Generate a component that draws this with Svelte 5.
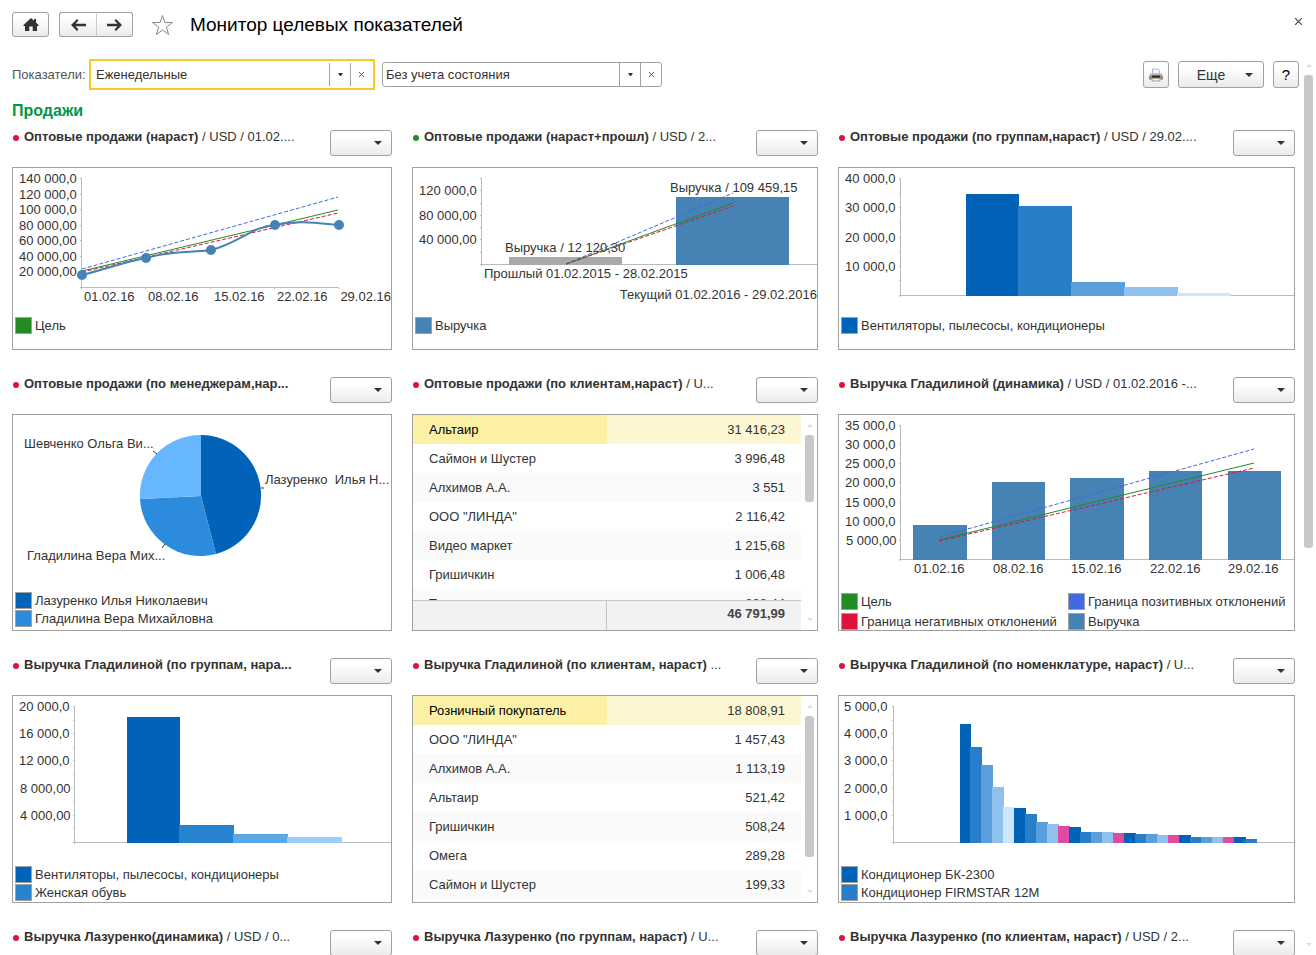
<script>
	const blues = ['#0063b8', '#287ec8', '#5a9fdc', '#8fc1ec', '#cce6ff'];
	const steel = '#4682b4';
	const green = '#228b22';
	const royal = '#4169e1';
	const crimson = '#dc143c';
	const pink = '#e04aa3';

	let period = $state('Еженедельные');
	let status = $state('Без учета состояния');

	const itemTops = [
		28, 51, 69, 91, 111, 112, 118, 126, 128, 130, 131, 136, 136, 136, 137, 137, 138, 138, 139, 139, 139, 141,
		141, 141, 141, 141, 143
	];

	const itemBars = itemTops.map((top, i) => {
		const color = i % 5 === 4 && i > 4 ? pink : blues[i % 5];
		return [i ? 120 + i * 11 : 121, top, i ? 12 : 11, color];
	});

	// bars: [x, top, width, color], lines: [x1, y1, x2, y2, color, dashed], labels: [x, y, text, anchor]
	const rows = [
		{
			height: 183,
			cards: [
				{
					title: 'Оптовые продажи (нараст)',
					info: ' / USD / 01.02....',
					chart: {
						height: 149,
						axis: { x: 68, top: 10, bottom: 119, end: 326 },
						ticks: [10, 26, 41, 57, 72, 88, 103],
						xTicks: [68, 132, 197, 261, 325],
						labels: [
							[6, 10, '140 000,0'],
							[6, 26, '120 000,0'],
							[6, 41, '100 000,0'],
							[6, 57, '80 000,00'],
							[6, 72, '60 000,00'],
							[6, 88, '40 000,00'],
							[6, 103, '20 000,00'],
							[71, 128, '01.02.16'],
							[135, 128, '08.02.16'],
							[201, 128, '15.02.16'],
							[264, 128, '22.02.16'],
							['100%', 128, '29.02.16', 'end']
						],
						lines: [
							[69, 101, 325, 29, royal, true],
							[69, 103, 325, 42, green, false],
							[69, 104, 325, 45, crimson, true]
						],
						curve: 'M69 107C90 102 111 94 133 90C160 82 178 85 198 82C224 76 240 58 262 57C284 52 304 55 326 57',
						dots: [
							[69, 107],
							[133, 90],
							[198, 82],
							[262, 57],
							[326, 57]
						]
					},
					legend: [[green, 'Цель']]
				},
				{
					title: 'Оптовые продажи (нараст+прошл)',
					info: ' / USD / 2...',
					good: true,
					chart: {
						height: 149,
						axis: { x: 68, top: 10, bottom: 96 },
						ticks: [10, 22, 35, 47, 59, 71, 84],
						bars: [
							[96, 89, 113, '#a9a9a9'],
							[263, 29, 113, steel]
						],
						labels: [
							[6, 22, '120 000,0'],
							[6, 47, '80 000,00'],
							[6, 71, '40 000,00'],
							[92, 79, 'Выручка / 12 120,30'],
							[257, 19, 'Выручка / 109 459,15'],
							[71, 105, 'Прошлый 01.02.2015 - 28.02.2015'],
							['100%', 126, 'Текущий 01.02.2016 - 29.02.2016', 'end']
						],
						lines: [
							[153, 96, 320, 25, royal, true],
							[153, 96, 320, 35, green, false],
							[153, 96, 320, 38, crimson, true]
						]
					},
					legend: [[steel, 'Выручка']]
				},
				{
					title: 'Оптовые продажи (по группам,нараст)',
					info: ' / USD / 29.02....',
					chart: {
						height: 149,
						axis: { x: 61, top: 10, bottom: 127 },
						ticks: [10, 25, 39, 54, 69, 83, 98, 112],
						bars: [
							[127, 26, 53, blues[0]],
							[179, 38, 54, blues[1]],
							[232, 114, 54, blues[2]],
							[285, 119, 54, blues[3]],
							[338, 125, 54, blues[4]]
						],
						labels: [
							[6, 10, '40 000,0'],
							[6, 39, '30 000,0'],
							[6, 69, '20 000,0'],
							[6, 98, '10 000,0']
						]
					},
					legend: [[blues[0], 'Вентиляторы, пылесосы, кондиционеры']]
				}
			]
		},
		{
			height: 217,
			cards: [
				{
					title: 'Оптовые продажи (по менеджерам,нар...',
					chart: {
						height: 177,
						slices: [
							['M188 81V20A60.5 60.5 0 0 1 203 139Z', '#0063b8'],
							['M188 81L203 139A60.5 60.5 0 0 1 127 84Z', '#2c8bdc'],
							['M188 81L127 84A60.5 60.5 0 0 1 188 20Z', '#66b7ff']
						],
						pointers: 'M140 36l4 3M149 133l3 -4M248 73h3',
						labels: [
							[11, 28, 'Шевченко Ольга Ви...'],
							[252, 64, 'Лазуренко\u00a0 Илья Н...'],
							[14, 140, 'Гладилина Вера Мих...']
						]
					},
					legend: [
						['#0063b8', 'Лазуренко Илья Николаевич'],
						['#2c8bdc', 'Гладилина Вера Михайловна']
					]
				},
				{
					title: 'Оптовые продажи (по клиентам,нараст)',
					info: ' / U...',
					table: [
						['Альтаир', '31 416,23'],
						['Саймон и Шустер', '3 996,48'],
						['Алхимов А.А.', '3 551'],
						['ООО "ЛИНДА"', '2 116,42'],
						['Видео маркет', '1 215,68'],
						['Гришичкин', '1 006,48'],
						['Топаз', '888,44']
					],
					total: '46 791,99',
					thumb: 38
				},
				{
					title: 'Выручка Гладилиной (динамика)',
					info: ' / USD / 01.02.2016 -...',
					chart: {
						height: 178,
						axis: { x: 61, top: 10, bottom: 144 },
						ticks: [10, 29, 48, 67, 87, 106, 125],
						bars: [
							[74, 110, 54, steel],
							[153, 67, 53, steel],
							[231, 63, 54, steel],
							[310, 56, 53, steel],
							[389, 56, 53, steel]
						],
						labels: [
							[6, 10, '35 000,0'],
							[6, 29, '30 000,0'],
							[6, 48, '25 000,0'],
							[6, 67, '20 000,0'],
							[6, 87, '15 000,0'],
							[6, 106, '10 000,0'],
							[7, 125, '5 000,00'],
							[75, 153, '01.02.16'],
							[154, 153, '08.02.16'],
							[232, 153, '15.02.16'],
							[311, 153, '22.02.16'],
							[389, 153, '29.02.16']
						],
						lines: [
							[100, 122, 415, 34, royal, true],
							[100, 125, 415, 48, green, false],
							[100, 126, 415, 53, crimson, true]
						]
					},
					wide: true,
					legend: [
						[green, 'Цель'],
						[royal, 'Граница позитивных отклонений'],
						[crimson, 'Граница негативных отклонений'],
						[steel, 'Выручка']
					]
				}
			]
		},
		{
			height: 208,
			cards: [
				{
					title: 'Выручка Гладилиной (по группам, нара...',
					chart: {
						height: 170,
						axis: { x: 61, top: 10, bottom: 146 },
						ticks: [10, 24, 37, 51, 64, 78, 92, 105, 119, 132],
						bars: [
							[114, 21, 53, '#0063b8'],
							[166, 129, 55, '#2984d0'],
							[220, 138, 55, '#5ca7e8'],
							[274, 141, 55, '#99cfff']
						],
						labels: [
							[6, 10, '20 000,0'],
							[6, 37, '16 000,0'],
							[6, 64, '12 000,0'],
							[7, 92, '8 000,00'],
							[7, 119, '4 000,00']
						]
					},
					legend: [
						['#0063b8', 'Вентиляторы, пылесосы, кондиционеры'],
						['#2984d0', 'Женская обувь']
					]
				},
				{
					title: 'Выручка Гладилиной (по клиентам, нараст)',
					info: ' ...',
					table: [
						['Розничный покупатель', '18 808,91'],
						['ООО "ЛИНДА"', '1 457,43'],
						['Алхимов А.А.', '1 113,19'],
						['Альтаир', '521,42'],
						['Гришичкин', '508,24'],
						['Омега', '289,28'],
						['Саймон и Шустер', '199,33']
					],
					thumb: 85
				},
				{
					title: 'Выручка Гладилиной (по номенклатуре, нараст)',
					info: ' / U...',
					chart: {
						height: 170,
						axis: { x: 54, top: 10, bottom: 146 },
						ticks: [10, 24, 37, 51, 64, 78, 92, 105, 119, 132],
						bars: itemBars,
						labels: [
							[5, 10, '5 000,0'],
							[5, 37, '4 000,0'],
							[5, 64, '3 000,0'],
							[5, 92, '2 000,0'],
							[5, 119, '1 000,0']
						]
					},
					legend: [
						[blues[0], 'Кондиционер БК-2300'],
						[blues[1], 'Кондиционер FIRMSTAR 12М']
					]
				}
			]
		},
		{
			height: 183,
			cards: [
				{ title: 'Выручка Лазуренко(динамика)', info: ' / USD / 0...' },
				{ title: 'Выручка Лазуренко (по группам, нараст)', info: ' / U...' },
				{ title: 'Выручка Лазуренко (по клиентам, нараст)', info: ' / USD / 2...' }
			]
		}
	];
</script>

{#snippet caret()}
	<svg class="caret" width="8" height="4" viewBox="0 0 8 4" aria-hidden="true"><path d="M0 0h8L4 4z" /></svg>
{/snippet}

{#snippet smallCaret()}
	<svg class="caret" width="5" height="3" viewBox="0 0 5 3" aria-hidden="true"><path d="M0 0h5L3 3H2z" /></svg>
{/snippet}

{#snippet cross(size)}
	<svg class="cross" width={size} height={size} viewBox="0 0 8 8" aria-hidden="true"><path d="M1 1l6 6M7 1l-6 6" /></svg>
{/snippet}

{#snippet plot(chart)}
	<svg class="plot" width="100%" height={chart.height}>
		{#if chart.axis}
			<g class="axis">
				<rect x={chart.axis.x} y={chart.axis.top} width="1" height={chart.axis.bottom - chart.axis.top + 2} />
				<rect x={chart.axis.x - 1} y={chart.axis.bottom} width={chart.axis.end ? chart.axis.end - chart.axis.x : '100%'} height="1" />
				{#each chart.ticks as y}
					<rect x={chart.axis.x - 1} {y} width="2" height="1" />
				{/each}
				{#each chart.xTicks ?? [] as x}
					<rect {x} y={chart.axis.bottom} width="1" height="2" />
				{/each}
			</g>
		{/if}
		{#each chart.bars ?? [] as [x, y, width, fill]}
			<rect {x} {y} {width} height={chart.axis.bottom + 1 - y} {fill} />
		{/each}
		{#each chart.slices ?? [] as [d, fill]}
			<path {d} {fill} />
		{/each}
		{#if chart.pointers}
			<path d={chart.pointers} class="pointers" />
		{/if}
		{#each chart.labels as [x, y, text, anchor]}
			<text {x} y={y + 5} text-anchor={anchor}>{text}</text>
		{/each}
		{#each chart.lines ?? [] as [x1, y1, x2, y2, stroke, dashed]}
			<line {x1} {y1} {x2} {y2} {stroke} class:dashed />
		{/each}
		{#if chart.curve}
			<path d={chart.curve} class="curve" />
			{#each chart.dots as [cx, cy]}
				<circle {cx} {cy} r="5" fill={steel} />
			{/each}
		{/if}
	</svg>
{/snippet}

{#snippet scrollbar(thumb)}
	<div class="scrollbar" aria-hidden="true">
		<svg width="6" height="3" viewBox="0 0 6 3"><path d="M3 0l3 3H0z" /></svg>
		<div class="track"><div class="thumb" style:height="{thumb}%"></div></div>
		<svg width="6" height="3" viewBox="0 0 6 3"><path d="M0 0h6L3 3z" /></svg>
	</div>
{/snippet}

<div class="page">
	<header>
		<button class="btn home" aria-label="Начальная страница">
			<svg width="16" height="14" viewBox="0 0 16 14"><path d="M8 0l3 2.700V1h2v3.500L15.500 7v1H14v5H9.700V8.500H6.300V13H2V8H.5V7z" /></svg>
		</button>
		<div class="nav">
			<button class="btn" aria-label="Назад">
				<svg width="15" height="12" viewBox="0 0 15 12"><path d="M6 0L0 6l6 6 1.500-1.500L4.500 7.300H15V4.700H4.500l3-3.200z" /></svg>
			</button>
			<button class="btn" aria-label="Вперед">
				<svg width="15" height="12" viewBox="0 0 15 12"><path d="M9 0l6 6-6 6-1.500-1.500 3-3.200H0V4.700h10.500l-3-3.200z" /></svg>
			</button>
		</div>
		<button class="plain" aria-label="В избранное">
			<svg class="star" width="23" height="22" viewBox="0 0 23 22"><path d="M11.500 1.500l2.400 7H21.500l-6.100 4.600 2.300 7.400-6.200-4.500-6.200 4.500 2.300-7.400L1.500 8.500h7.600z" /></svg>
		</button>
		<h1>Монитор целевых показателей</h1>
		<button class="plain close" aria-label="Закрыть">{@render cross(9)}</button>
	</header>

	<div class="body">
		<main>
			<div class="toolbar">
				<label for="period">Показатели:</label>
				<div class="combo active">
					<input id="period" bind:value={period} />
					<button aria-label="Выбрать показатели">{@render smallCaret()}</button>
					<button aria-label="Очистить показатели" onclick={() => (period = '')}>{@render cross(7)}</button>
				</div>
				<div class="combo">
					<input aria-label="Состояние" bind:value={status} />
					<button aria-label="Выбрать состояние">{@render smallCaret()}</button>
					<button aria-label="Очистить состояние" onclick={() => (status = '')}>{@render cross(7)}</button>
				</div>
				<div class="actions">
					<button class="btn square" aria-label="Печать">
						<svg width="14" height="14" viewBox="0 0 14 14">
							<path d="M3.500 6V1h5.500l1.500 1.500V6z" fill="#f4f9fd" stroke="#9db8cf" />
							<path d="M1.500 5.500h11L14 8v4H0V8z" fill="#b9b5b1" />
							<path d="M0 8h14v3H0z" fill="#8d8986" />
							<path d="M3 7.500h8v2H3z" fill="#222" />
							<path d="M3 10.500h8V13H3z" fill="#f5eee8" stroke="#a89f98" />
							<path d="M11.500 6.500h1v1h-1z" fill="#e07030" />
						</svg>
					</button>
					<button class="btn more">Еще {@render caret()}</button>
					<button class="btn square">?</button>
				</div>
			</div>

			<h2>Продажи</h2>

			<div class="rows">
				{#each rows as row}
					<div class="row">
						{#each row.cards as card}
							<section>
								<div class="head">
									<span class="dot" class:good={card.good}></span>
									<h3>{card.title}<span>{card.info ?? ''}</span></h3>
									<button class="btn menu" aria-label="Действия">{@render caret()}</button>
								</div>
								<div class="panel" style:height="{row.height}px">
									{#if card.chart}
										{@render plot(card.chart)}
										<ul class="legend" class:wide={card.wide}>
											{#each card.legend as [color, name]}
												<li><i style:background={color}></i>{name}</li>
											{/each}
										</ul>
									{:else if card.table}
										<div class="list">
											<div class="content">
												<div class="scroller">
													<table>
														<tbody>
															{#each card.table as [name, sum]}
																<tr>
																	<td>{name}</td>
																	<td>{sum}</td>
																</tr>
															{/each}
														</tbody>
													</table>
												</div>
												{#if card.total}
													<div class="total">
														<span></span>
														<span>{card.total}</span>
													</div>
												{/if}
											</div>
											{@render scrollbar(card.thumb)}
										</div>
									{/if}
								</div>
							</section>
						{/each}
					</div>
				{/each}
			</div>
		</main>
		{@render scrollbar(55)}
	</div>
</div>

<style>
	:global(body) {
		margin: 0;
		background: #fff;
	}

	.page {
		display: flex;
		flex-direction: column;
		height: 100vh;
		overflow: hidden;
		font: 13px 'Liberation Sans', Arial, sans-serif;
		color: #333;
	}

	button,
	input {
		box-sizing: border-box;
		margin: 0;
		padding: 0;
		font: inherit;
		color: inherit;
	}

	.btn {
		display: flex;
		align-items: center;
		justify-content: center;
		height: 26px;
		border: 1px solid #a0a0a0;
		border-radius: 3px;
		background: linear-gradient(#fff 20%, #ebebeb);
	}

	.plain {
		display: flex;
		border: 0;
		background: none;
	}

	header {
		display: flex;
		align-items: center;
		padding: 12px 13px 0 12px;
		height: 25px;
	}

	header .btn {
		height: 25px;
	}

	.home {
		width: 37px;
		margin-right: 10px;
	}

	.nav {
		display: flex;
		margin-right: 18px;
	}

	.nav .btn {
		width: 37px;
	}

	.nav .btn:first-child {
		width: 38px;
		border-right-color: #ccc;
		border-radius: 3px 0 0 3px;
	}

	.nav .btn:last-child {
		margin-left: -1px;
		border-left-color: #ccc;
		border-radius: 0 3px 3px 0;
	}

	.btn svg {
		fill: #333;
	}

	.star {
		fill: none;
		stroke: #888;
	}

	h1 {
		flex: 1;
		margin: 0 0 0 16px;
		font-size: 19px;
		font-weight: normal;
		color: #000;
	}

	.cross {
		fill: none;
		stroke: #444;
	}

	.close {
		padding-bottom: 6px;
	}

	.body {
		display: flex;
		flex: 1;
		min-height: 0;
		padding-top: 22px;
	}

	main {
		flex: 1;
		min-width: 0;
		padding-left: 12px;
		overflow: hidden;
	}

	.toolbar {
		display: flex;
		align-items: center;
		height: 31px;
		padding-right: 5px;
	}

	label {
		width: 77px;
		color: #555;
	}

	.combo {
		display: flex;
		box-sizing: border-box;
		width: 280px;
		height: 25px;
		border: 1px solid #a0a0a0;
		border-radius: 3px;
	}

	.combo.active {
		width: 286px;
		height: 31px;
		margin-right: 7px;
		padding: 2px;
		border: 2px solid #f9cb20;
		border-radius: 0;
	}

	.combo input {
		flex: 1;
		min-width: 0;
		padding-left: 3px;
		border: 0;
		outline: 0;
		background: none;
	}

	.combo button {
		display: flex;
		align-items: center;
		justify-content: center;
		width: 21px;
		border: 0;
		border-left: 1px solid #a0a0a0;
		background: none;
	}

	.caret {
		fill: #333;
	}

	.actions {
		display: flex;
		gap: 9px;
		margin-left: auto;
	}

	.actions .btn {
		height: 27px;
	}

	.square {
		width: 26px;
		font-size: 15px;
		color: #000;
	}

	.more {
		gap: 20px;
		width: 86px;
		padding-left: 8px;
		font-size: 14px;
	}

	h2 {
		margin: 10px 0 8px;
		font-size: 16px;
		line-height: 22px;
		color: #009646;
	}

	.rows {
		display: flex;
		flex-direction: column;
		gap: 27px;
		padding-right: 9px;
	}

	.row {
		display: grid;
		grid-template-columns: 380fr 406fr 457fr;
		gap: 20px;
	}

	section {
		min-width: 0;
	}

	.head {
		display: flex;
		align-items: flex-start;
		margin-bottom: 11px;
	}

	.dot {
		width: 6px;
		height: 6px;
		margin: 5px 5px 0 1px;
		border-radius: 50%;
		background: #dc143c;
	}

	.dot.good {
		background: #228b22;
	}

	h3 {
		flex: 1;
		min-width: 0;
		margin: 0;
		font-size: 13px;
		line-height: 14px;
		white-space: nowrap;
	}

	h3 span {
		font-weight: normal;
		white-space: pre;
	}

	.menu {
		flex: none;
		justify-content: flex-end;
		width: 62px;
		padding-right: 9px;
	}

	.panel {
		box-sizing: border-box;
		border: 1px solid #a0a0a0;
		overflow: hidden;
	}

	.plot {
		display: block;
	}

	.plot text {
		fill: #333;
		font-size: 13px;
	}

	.axis {
		fill: #bbb;
	}

	.dashed {
		stroke-dasharray: 4 2;
	}

	.pointers {
		fill: none;
		stroke: #333;
	}

	.curve {
		fill: none;
		stroke: #4682b4;
		stroke-width: 2px;
	}

	.legend {
		display: grid;
		row-gap: 1px;
		margin: 0;
		padding: 0 2px;
		list-style: none;
	}

	.legend.wide {
		grid-template-columns: 1fr 1fr;
		gap: 3px;
	}

	.legend li {
		display: flex;
		align-items: center;
		gap: 3px;
		line-height: 17px;
		white-space: nowrap;
	}

	.legend i {
		box-sizing: border-box;
		width: 17px;
		height: 17px;
		border: 1px solid #a0a0a0;
	}

	.list {
		display: flex;
		height: 100%;
	}

	.content {
		display: flex;
		flex: 1;
		flex-direction: column;
		min-width: 0;
	}

	.scroller {
		flex: 1;
		min-height: 0;
		overflow: hidden;
	}

	table {
		width: 100%;
		table-layout: fixed;
		border-spacing: 0;
	}

	td {
		box-sizing: border-box;
		height: 29px;
		padding: 0 16px;
	}

	td:last-child {
		text-align: right;
	}

	tr:nth-child(odd) td {
		background: #fafafa;
	}

	tr:first-child td {
		background: #fdf6d3;
	}

	tr:first-child td:first-child {
		background: #fcf0a5;
		color: #000;
	}

	.total {
		display: grid;
		grid-template-columns: 1fr 1fr;
		border-top: 1px solid #c6c6c6;
		background: #f2f2f2;
		font-weight: bold;
		line-height: 25px;
		color: #444;
	}

	.total span {
		height: 29px;
		padding-right: 16px;
		text-align: right;
	}

	.total span:first-child {
		border-right: 1px solid #c6c6c6;
	}

	.scrollbar {
		display: flex;
		flex-direction: column;
		align-items: center;
		flex: none;
		width: 9px;
		padding: 5px 3px 9px 0;
		fill: #ddd;
	}

	.list .scrollbar {
		padding: 9px 3px 9px 4px;
	}

	.track {
		flex: 1;
		width: 100%;
		margin: 8px 0;
	}

	.thumb {
		border-radius: 3px;
		background: #c8c8c8;
	}
</style>
